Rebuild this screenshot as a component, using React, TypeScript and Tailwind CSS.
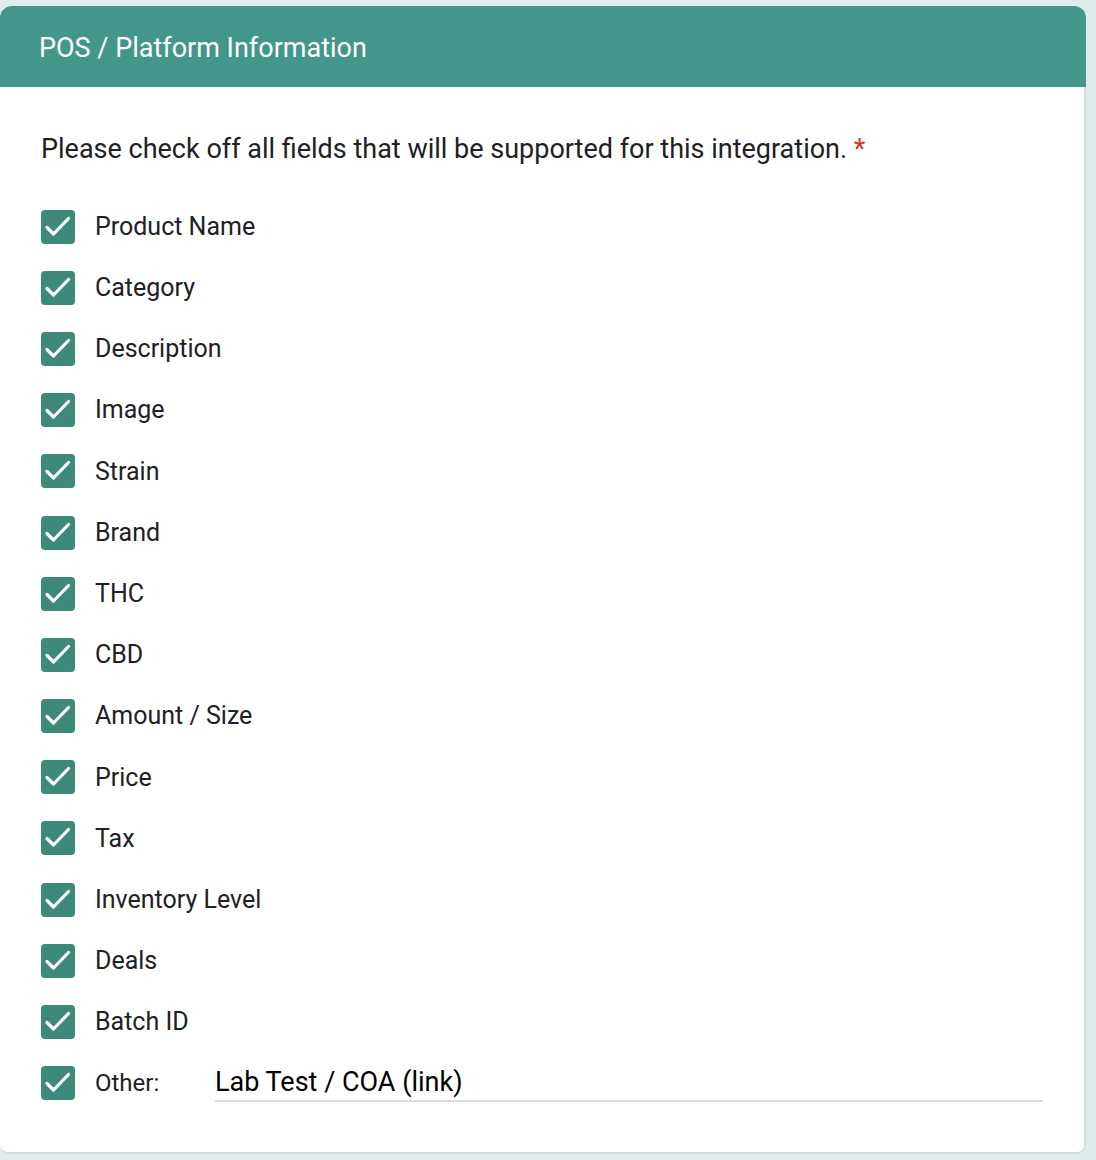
import React from "react";

const items = [
  "Product Name",
  "Category",
  "Description",
  "Image",
  "Strain",
  "Brand",
  "THC",
  "CBD",
  "Amount / Size",
  "Price",
  "Tax",
  "Inventory Level",
  "Deals",
  "Batch ID",
];

function Box() {
  return (
    <div className="w-[34px] h-[34px] rounded-[4px] bg-[#3e8a7a] shrink-0">
      <svg width="34" height="34" viewBox="0 0 34 34" fill="none">
        <path d="M6 17.5l6.5 6.5L27.5 8.5" stroke="white" strokeWidth="3.2" strokeLinecap="round" strokeLinejoin="round" />
      </svg>
    </div>
  );
}

export default function App() {
  return (
    <div className="w-[1096px] h-[1160px] bg-[#deeceb] pt-[6px] overflow-hidden" style={{ fontFamily: "Roboto, 'Liberation Sans', sans-serif" }}>
      <div className="w-[1086px] h-[1148px] flex flex-col">
        <div className="h-[81px] bg-[#43968a] rounded-t-[12px] flex items-center pl-[39px] pt-[4px] shrink-0">
          <span className="text-white text-[27px] leading-none">POS / Platform Information</span>
        </div>
        <div className="flex-1 bg-white border-r-2 border-b-2 border-[#d9dcdc] rounded-b-[9px] pl-[41px] pt-[46px]">
          <p className="text-[27px] leading-[32px] text-[#202124]">
            Please check off all fields that will be supported for this integration.{" "}
            <span className="text-[#d93025]">*</span>
          </p>
          <div className="mt-[31px] flex flex-col">
            {items.map((it) => (
              <div key={it} className="h-[61.2px] flex items-center">
                <Box />
                <span className="ml-[20px] text-[25px] text-[#202124]">{it}</span>
              </div>
            ))}
            <div className="h-[61.2px] flex items-center">
              <Box />
              <span className="ml-[20px] w-[120px] text-[24px] text-[#202124]">Other:</span>
              <div className="w-[828px] border-b-2 border-[#dadce0] pt-[1px] pb-[2px]">
                <span className="text-[27px] text-black leading-[32px]">Lab Test / COA (link)</span>
              </div>
            </div>
          </div>
        </div>
      </div>
    </div>
  );
}
